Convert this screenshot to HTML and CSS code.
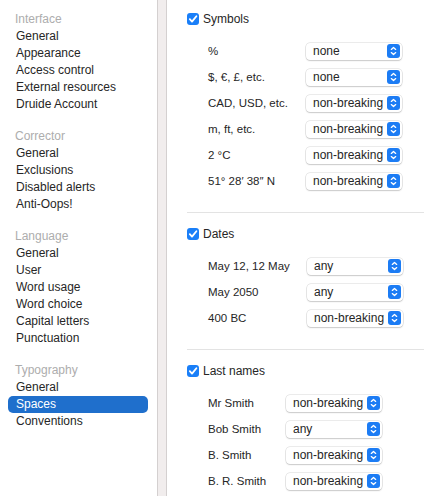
FILE: index.html
```html
<!DOCTYPE html>
<html>
<head>
<meta charset="utf-8">
<link rel="stylesheet" href="styles.css">
</head>
<body>
<div class="window">
  <nav class="sidebar">
    <div class="group">
      <div class="group-title">Interface</div>
      <div class="item">General</div>
      <div class="item">Appearance</div>
      <div class="item">Access control</div>
      <div class="item">External resources</div>
      <div class="item">Druide Account</div>
    </div>
    <div class="group">
      <div class="group-title">Corrector</div>
      <div class="item">General</div>
      <div class="item">Exclusions</div>
      <div class="item">Disabled alerts</div>
      <div class="item">Anti-Oops!</div>
    </div>
    <div class="group">
      <div class="group-title">Language</div>
      <div class="item">General</div>
      <div class="item">User</div>
      <div class="item">Word usage</div>
      <div class="item">Word choice</div>
      <div class="item">Capital letters</div>
      <div class="item">Punctuation</div>
    </div>
    <div class="group">
      <div class="group-title">Typography</div>
      <div class="item">General</div>
      <div class="item selected">Spaces</div>
      <div class="item">Conventions</div>
    </div>
  </nav>
  <div class="splitter"></div>
  <main class="content">
    <section class="section first">
      <div class="section-head">
        <span class="check"><svg viewBox="0 0 12 12" width="12" height="12"><path d="M2.8 6.2 L5 8.6 L9.4 3.2" fill="none" stroke="#fff" stroke-width="1.8" stroke-linecap="round" stroke-linejoin="round"/></svg></span>
        <span class="section-title">Symbols</span>
      </div>
      <div class="rows symbols">
        <div class="row"><span class="label">%</span><span class="popup"><span class="val">none</span><span class="stepper"><svg viewBox="0 0 13 14" width="13" height="14"><path d="M4.3 5.4 L6.5 3.4 L8.7 5.4 M4.3 8.6 L6.5 10.6 L8.7 8.6" fill="none" stroke="#fff" stroke-width="1.3" stroke-linecap="round" stroke-linejoin="round"/></svg></span></span></div>
        <div class="row"><span class="label">$, €, £, etc.</span><span class="popup"><span class="val">none</span><span class="stepper"><svg viewBox="0 0 13 14" width="13" height="14"><path d="M4.3 5.4 L6.5 3.4 L8.7 5.4 M4.3 8.6 L6.5 10.6 L8.7 8.6" fill="none" stroke="#fff" stroke-width="1.3" stroke-linecap="round" stroke-linejoin="round"/></svg></span></span></div>
        <div class="row"><span class="label">CAD, USD, etc.</span><span class="popup"><span class="val">non-breaking</span><span class="stepper"><svg viewBox="0 0 13 14" width="13" height="14"><path d="M4.3 5.4 L6.5 3.4 L8.7 5.4 M4.3 8.6 L6.5 10.6 L8.7 8.6" fill="none" stroke="#fff" stroke-width="1.3" stroke-linecap="round" stroke-linejoin="round"/></svg></span></span></div>
        <div class="row"><span class="label">m, ft, etc.</span><span class="popup"><span class="val">non-breaking</span><span class="stepper"><svg viewBox="0 0 13 14" width="13" height="14"><path d="M4.3 5.4 L6.5 3.4 L8.7 5.4 M4.3 8.6 L6.5 10.6 L8.7 8.6" fill="none" stroke="#fff" stroke-width="1.3" stroke-linecap="round" stroke-linejoin="round"/></svg></span></span></div>
        <div class="row"><span class="label">2 °C</span><span class="popup"><span class="val">non-breaking</span><span class="stepper"><svg viewBox="0 0 13 14" width="13" height="14"><path d="M4.3 5.4 L6.5 3.4 L8.7 5.4 M4.3 8.6 L6.5 10.6 L8.7 8.6" fill="none" stroke="#fff" stroke-width="1.3" stroke-linecap="round" stroke-linejoin="round"/></svg></span></span></div>
        <div class="row"><span class="label">51° 28′ 38″ N</span><span class="popup"><span class="val">non-breaking</span><span class="stepper"><svg viewBox="0 0 13 14" width="13" height="14"><path d="M4.3 5.4 L6.5 3.4 L8.7 5.4 M4.3 8.6 L6.5 10.6 L8.7 8.6" fill="none" stroke="#fff" stroke-width="1.3" stroke-linecap="round" stroke-linejoin="round"/></svg></span></span></div>
      </div>
    </section>
    <section class="section">
      <div class="section-head">
        <span class="check"><svg viewBox="0 0 12 12" width="12" height="12"><path d="M2.8 6.2 L5 8.6 L9.4 3.2" fill="none" stroke="#fff" stroke-width="1.8" stroke-linecap="round" stroke-linejoin="round"/></svg></span>
        <span class="section-title">Dates</span>
      </div>
      <div class="rows dates">
        <div class="row"><span class="label">May 12, 12 May</span><span class="popup"><span class="val">any</span><span class="stepper"><svg viewBox="0 0 13 14" width="13" height="14"><path d="M4.3 5.4 L6.5 3.4 L8.7 5.4 M4.3 8.6 L6.5 10.6 L8.7 8.6" fill="none" stroke="#fff" stroke-width="1.3" stroke-linecap="round" stroke-linejoin="round"/></svg></span></span></div>
        <div class="row"><span class="label">May 2050</span><span class="popup"><span class="val">any</span><span class="stepper"><svg viewBox="0 0 13 14" width="13" height="14"><path d="M4.3 5.4 L6.5 3.4 L8.7 5.4 M4.3 8.6 L6.5 10.6 L8.7 8.6" fill="none" stroke="#fff" stroke-width="1.3" stroke-linecap="round" stroke-linejoin="round"/></svg></span></span></div>
        <div class="row"><span class="label">400 BC</span><span class="popup"><span class="val">non-breaking</span><span class="stepper"><svg viewBox="0 0 13 14" width="13" height="14"><path d="M4.3 5.4 L6.5 3.4 L8.7 5.4 M4.3 8.6 L6.5 10.6 L8.7 8.6" fill="none" stroke="#fff" stroke-width="1.3" stroke-linecap="round" stroke-linejoin="round"/></svg></span></span></div>
      </div>
    </section>
    <section class="section">
      <div class="section-head">
        <span class="check"><svg viewBox="0 0 12 12" width="12" height="12"><path d="M2.8 6.2 L5 8.6 L9.4 3.2" fill="none" stroke="#fff" stroke-width="1.8" stroke-linecap="round" stroke-linejoin="round"/></svg></span>
        <span class="section-title">Last names</span>
      </div>
      <div class="rows names">
        <div class="row"><span class="label">Mr Smith</span><span class="popup"><span class="val">non-breaking</span><span class="stepper"><svg viewBox="0 0 13 14" width="13" height="14"><path d="M4.3 5.4 L6.5 3.4 L8.7 5.4 M4.3 8.6 L6.5 10.6 L8.7 8.6" fill="none" stroke="#fff" stroke-width="1.3" stroke-linecap="round" stroke-linejoin="round"/></svg></span></span></div>
        <div class="row"><span class="label">Bob Smith</span><span class="popup"><span class="val">any</span><span class="stepper"><svg viewBox="0 0 13 14" width="13" height="14"><path d="M4.3 5.4 L6.5 3.4 L8.7 5.4 M4.3 8.6 L6.5 10.6 L8.7 8.6" fill="none" stroke="#fff" stroke-width="1.3" stroke-linecap="round" stroke-linejoin="round"/></svg></span></span></div>
        <div class="row"><span class="label">B. Smith</span><span class="popup"><span class="val">non-breaking</span><span class="stepper"><svg viewBox="0 0 13 14" width="13" height="14"><path d="M4.3 5.4 L6.5 3.4 L8.7 5.4 M4.3 8.6 L6.5 10.6 L8.7 8.6" fill="none" stroke="#fff" stroke-width="1.3" stroke-linecap="round" stroke-linejoin="round"/></svg></span></span></div>
        <div class="row"><span class="label">B. R. Smith</span><span class="popup"><span class="val">non-breaking</span><span class="stepper"><svg viewBox="0 0 13 14" width="13" height="14"><path d="M4.3 5.4 L6.5 3.4 L8.7 5.4 M4.3 8.6 L6.5 10.6 L8.7 8.6" fill="none" stroke="#fff" stroke-width="1.3" stroke-linecap="round" stroke-linejoin="round"/></svg></span></span></div>
      </div>
    </section>
  </main>
</div>
</body>
</html>
```
FILE: styles.css
```css
html, body {
  margin: 0;
  padding: 0;
  background: #fff;
}
body {
  font-family: "Liberation Sans", Arial, sans-serif;
  font-size: 12px;
  color: #262626;
  width: 424px;
  height: 496px;
  overflow: hidden;
}
.window {
  display: flex;
  height: 496px;
}
.sidebar {
  width: 157px;
  flex: none;
  border-right: 1px solid #d4d0d0;
  padding-top: 10px;
  box-sizing: content-box;
}
.group {
  margin-bottom: 14px;
}
.group-title {
  height: 18px;
  line-height: 18px;
  padding-left: 15px;
  color: #adadad;
  font-size: 12px;
}
.item {
  height: 17px;
  line-height: 17px;
  margin: 0 9px 0 8px;
  padding-left: 8px;
  border-radius: 5px;
}
.item.selected {
  background: #1f6fcc;
  color: #fff;
}
.splitter {
  width: 8px;
  flex: none;
  background: #f1eded;
  border-right: 1px solid #d4d0d0;
}
.content {
  flex: 1;
  min-width: 0;
}
.section {
  margin-left: 20px;
  padding: 11px 0 18px;
  border-top: 1px solid #e3e3e3;
}
.section.first {
  border-top: none;
  padding-top: 9px;
}
.section-head {
  display: flex;
  align-items: center;
  height: 20px;
  gap: 4px;
}
.check {
  width: 12px;
  height: 12px;
  border-radius: 3px;
  background: #1a7ff8;
  display: flex;
}
.section-title {
  font-size: 12px;
}
.rows {
  margin-top: 9px;
  padding-left: 21px;
}
.row {
  display: flex;
  align-items: center;
  height: 26px;
}
.label {
  flex: none;
  font-size: 11.5px;
}
.symbols .label { width: 98px; }
.dates .label { width: 99px; }
.names .label { width: 78px; }
.popup {
  width: 96px;
  height: 17px;
  box-sizing: border-box;
  display: flex;
  align-items: center;
  justify-content: space-between;
  padding: 0 2px 0 7px;
  background: #fff;
  border-radius: 4px;
  box-shadow: 0 0 0 0.5px rgba(0,0,0,0.16), 0 1px 1.5px rgba(0,0,0,0.14);
}
.stepper {
  width: 13px;
  height: 14px;
  border-radius: 3px;
  background: #1c7cf4;
  display: flex;
}
```
